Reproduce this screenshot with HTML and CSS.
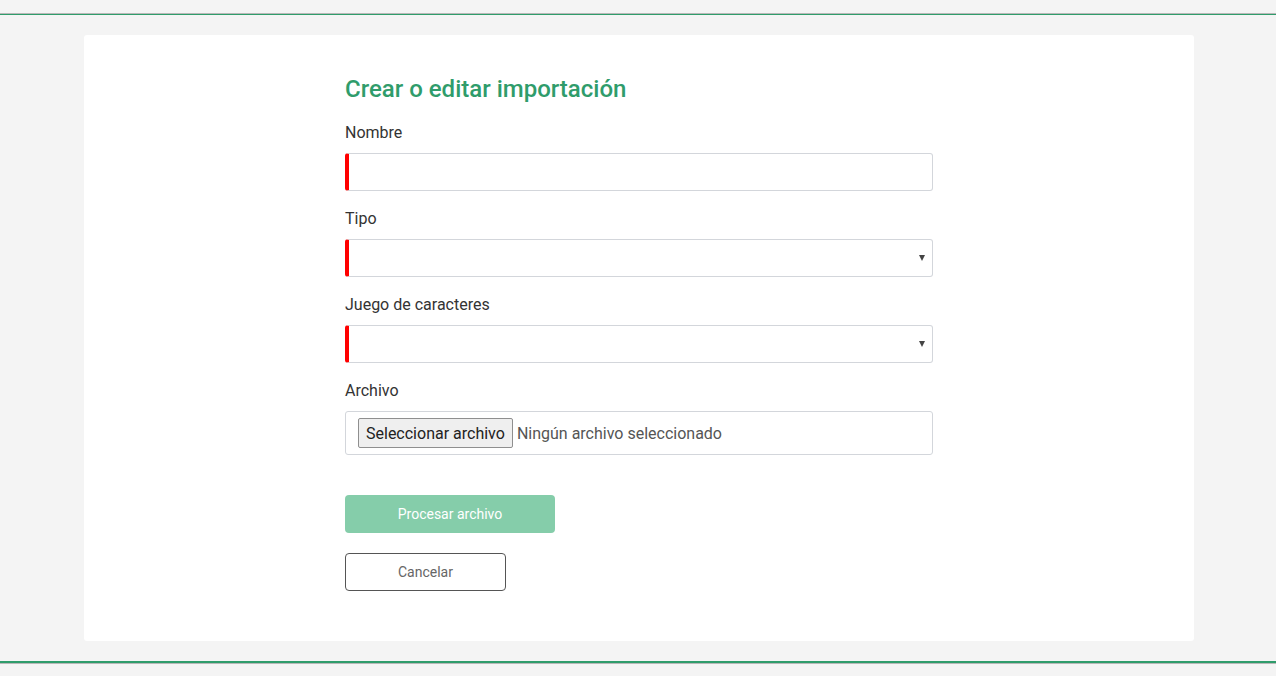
FILE: index.html
```html
<!DOCTYPE html>
<html lang="es">
<head>
    <meta charset="utf-8">
    <title>Crear o editar importación</title>
    <meta name="viewport" content="width=device-width, initial-scale=1.0">
    <link rel="stylesheet" href="styles.css">
</head>
<body>
    <div class="topbar"></div>

    <div class="card">
        <form class="import-form">
            <h1>Crear o editar importación</h1>

            <div class="field">
                <label for="nombre">Nombre</label>
                <input type="text" id="nombre" class="control required">
            </div>

            <div class="field">
                <label for="tipo">Tipo</label>
                <div class="select-wrap">
                    <select id="tipo" class="control required"></select>
                </div>
            </div>

            <div class="field">
                <label for="charset">Juego de caracteres</label>
                <div class="select-wrap">
                    <select id="charset" class="control required"></select>
                </div>
            </div>

            <div class="field">
                <label>Archivo</label>
                <div class="file-box">
                    <button type="button" class="file-btn">Seleccionar archivo</button>
                    <span class="file-name">Ningún archivo seleccionado</span>
                </div>
            </div>

            <div class="actions">
                <button type="button" class="btn-primary" disabled>Procesar archivo</button>
                <button type="button" class="btn-secondary">Cancelar</button>
            </div>
        </form>
    </div>

    <div class="bottombar"></div>
</body>
</html>
```

FILE: styles.css
```css
body {
    font-family: Roboto, "Liberation Sans", Arial, sans-serif;
    background-color: #f4f4f4;
    margin: 0;
    color: #333;
}
.topbar {
    height: 13px;
    border-bottom: 1px solid #b8b8b8;
    box-shadow: 0 1px 0 #2f9c6b;
}
.card {
    background-color: #fff;
    margin: 21px 82px 0 84px;
    border-radius: 3px;
    height: 606px;
    box-sizing: border-box;
    padding: 40px 0 50px;
}
.import-form {
    width: 588px;
    margin: 0 auto;
}
h1 {
    font-size: 24px;
    font-weight: 500;
    line-height: 28px;
    color: #2f9c6b;
    margin: 0 0 19px;
}
.field {
    margin-bottom: 17px;
}
.field label {
    display: block;
    font-size: 16px;
    line-height: 22px;
    margin-bottom: 9px;
    color: #333;
}
.control {
    display: block;
    width: 100%;
    height: 38px;
    box-sizing: border-box;
    border: 1px solid #d3d6db;
    border-radius: 3px;
    background-color: #fff;
    font-family: inherit;
    font-size: 15px;
    padding: 0 12px;
    margin: 0;
    outline: none;
}
.required {
    border-left: 4px solid #ff0000;
}
select.control {
    appearance: none;
    -webkit-appearance: none;
}
.select-wrap {
    position: relative;
}
.select-wrap::after {
    content: "";
    position: absolute;
    right: 8px;
    top: 16px;
    border-left: 3px solid transparent;
    border-right: 3px solid transparent;
    border-top: 6px solid #444;
}
.file-box {
    border: 1px solid #d3d6db;
    border-radius: 3px;
    padding: 6px 12px;
    display: flex;
    align-items: center;
    gap: 4px;
}
.file-btn {
    height: 30px;
    padding: 0 7px;
    font-family: inherit;
    font-size: 16px;
    color: #222;
    background-color: #efefef;
    border: 1px solid #8f8f8f;
    border-radius: 2px;
}
.file-name {
    font-size: 16px;
    color: #555;
}
.actions {
    display: flex;
    flex-direction: column;
    align-items: flex-start;
    gap: 20px;
    margin-top: 40px;
}
.btn-primary {
    width: 210px;
    height: 38px;
    background-color: #85cdaa;
    color: #fff;
    border: none;
    border-radius: 4px;
    font-family: inherit;
    font-size: 14px;
}
.btn-secondary {
    width: 161px;
    height: 38px;
    background-color: #fff;
    color: #666;
    border: 1px solid #555;
    border-radius: 4px;
    font-family: inherit;
    font-size: 14px;
}
.bottombar {
    margin-top: 20px;
    border-top: 2px solid #2f9c6b;
    border-bottom: 1px solid #b8b8b8;
}
```
